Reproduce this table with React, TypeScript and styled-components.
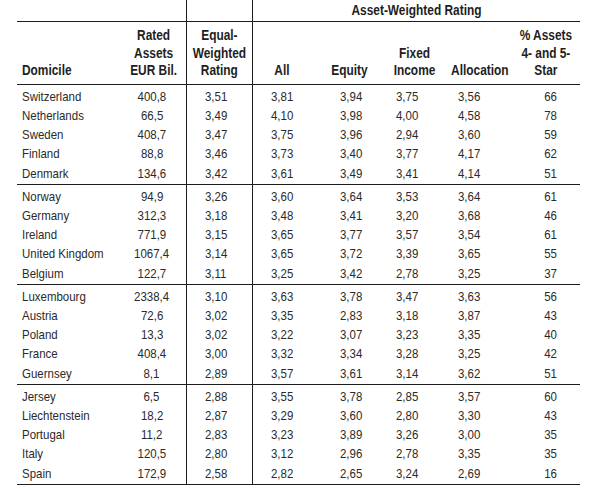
import React from 'react'
import styled, { createGlobalStyle } from 'styled-components'

type Row = [string, string, string, string, string, string, string, string];

const groups: Row[][] = [
    [
        ['Switzerland', '400,8', '3,51', '3,81', '3,94', '3,75', '3,56', '66'],
        ['Netherlands', '66,5', '3,49', '4,10', '3,98', '4,00', '4,58', '78'],
        ['Sweden', '408,7', '3,47', '3,75', '3,96', '2,94', '3,60', '59'],
        ['Finland', '88,8', '3,46', '3,73', '3,40', '3,77', '4,17', '62'],
        ['Denmark', '134,6', '3,42', '3,61', '3,49', '3,41', '4,14', '51'],
    ],
    [
        ['Norway', '94,9', '3,26', '3,60', '3,64', '3,53', '3,64', '61'],
        ['Germany', '312,3', '3,18', '3,48', '3,41', '3,20', '3,68', '46'],
        ['Ireland', '771,9', '3,15', '3,65', '3,77', '3,57', '3,54', '61'],
        ['United Kingdom', '1067,4', '3,14', '3,65', '3,72', '3,39', '3,65', '55'],
        ['Belgium', '122,7', '3,11', '3,25', '3,42', '2,78', '3,25', '37'],
    ],
    [
        ['Luxembourg', '2338,4', '3,10', '3,63', '3,78', '3,47', '3,63', '56'],
        ['Austria', '72,6', '3,02', '3,35', '2,83', '3,18', '3,87', '43'],
        ['Poland', '13,3', '3,02', '3,22', '3,07', '3,23', '3,35', '40'],
        ['France', '408,4', '3,00', '3,32', '3,34', '3,28', '3,25', '42'],
        ['Guernsey', '8,1', '2,89', '3,57', '3,61', '3,14', '3,62', '51'],
    ],
    [
        ['Jersey', '6,5', '2,88', '3,55', '3,78', '2,85', '3,57', '60'],
        ['Liechtenstein', '18,2', '2,87', '3,29', '3,60', '2,80', '3,30', '43'],
        ['Portugal', '11,2', '2,83', '3,23', '3,89', '3,26', '3,00', '35'],
        ['Italy', '120,5', '2,80', '3,12', '2,96', '2,78', '3,35', '35'],
        ['Spain', '172,9', '2,58', '2,82', '2,65', '3,24', '2,69', '16'],
    ],
];

// column widths and how far the numbers sit off the column centre
const widths = [105, 64, 66, 60, 70, 66, 64, 68];
const shifts = [0, -2, -3, 0, 4, -8, -11, 4];
// row heights and top padding inside one group of five (a rule follows the last)
const rowHeights = [22, 19, 19, 19, 21];
const rowPads = [3, 0, 0, 0, 1];

const headers: string[][] = [
    ['Domicile'],
    ['Rated', 'Assets', 'EUR Bil.'],
    ['Equal-', 'Weighted', 'Rating'],
    ['All'],
    ['Equity'],
    ['Fixed', 'Income'],
    ['Allocation'],
    ['% Assets', '4- and 5-', 'Star'],
];

const App = () => {
    return (
        <>
            <GlobalStyle />
            <Page>
                <Table>
                    <colgroup>
                        {widths.map((w, i) => <col key={i} style={{ width: w }} />)}
                    </colgroup>
                    <thead>
                        <tr>
                            <SuperCell colSpan={2} />
                            <SuperCell $ruled />
                            <SuperCell $ruled colSpan={5}>
                                <Fit><Squeeze>Asset-Weighted Rating</Squeeze></Fit>
                            </SuperCell>
                        </tr>
                        <tr>
                            {headers.map((lines, i) => (
                                <HeadCell key={i} $left={i === 0} $ruled={i === 2 || i === 3} $shift={i === 4 ? 2 : 0}>
                                    <Fit $left={i === 0}>
                                        <Squeeze $left={i === 0}>
                                            {lines.map((l, j) => <div key={j}>{l}</div>)}
                                        </Squeeze>
                                    </Fit>
                                </HeadCell>
                            ))}
                        </tr>
                    </thead>
                    <tbody>
                        {groups.map((rows, g) =>
                            rows.map((row, r) => (
                                <tr key={g + '-' + r}>
                                    {row.map((v, i) => (
                                        <DataCell
                                            key={i}
                                            $left={i === 0}
                                            $ruled={i === 2 || i === 3}
                                            $end={r === rows.length - 1}
                                            $h={rowHeights[r]}
                                            $pad={rowPads[r]}
                                            $shift={shifts[i]}
                                        >
                                            <Fit $left={i === 0}>
                                                <Squeeze $left={i === 0}>{v}</Squeeze>
                                            </Fit>
                                        </DataCell>
                                    ))}
                                </tr>
                            ))
                        )}
                    </tbody>
                </Table>
            </Page>
        </>
    )
}

export default App


const LINE = '#1c1c1c';

const GlobalStyle = createGlobalStyle`
    body {
        margin: 0;
        background: #ffffff;
        font-family: "Liberation Sans", Arial, sans-serif;
    }
`;

const Page = styled.div`
    padding-left: 17px;
    width: 600px;
    height: 490px;
    box-sizing: border-box;
    overflow: hidden;
`;

const Table = styled.table`
    border-collapse: collapse;
    table-layout: fixed;
    width: 563px;
`;

// the type is a condensed grotesque: squeeze Liberation Sans sideways
const Fit = styled.div<{ $left?: boolean }>`
    display: flex;
    justify-content: ${p => (p.$left ? 'flex-start' : 'center')};
`;

const Squeeze = styled.span<{ $left?: boolean }>`
    display: inline-block;
    flex-shrink: 0;
    white-space: nowrap;
    transform: scaleX(0.85);
    transform-origin: ${p => (p.$left ? 'left' : 'center')} center;
`;

const SuperCell = styled.th<{ $ruled?: boolean }>`
    box-sizing: border-box;
    height: 21px;
    padding: 0;
    border-bottom: 1px solid ${LINE};
    border-left: ${p => (p.$ruled ? `1px solid ${LINE}` : 'none')};
    font-size: 14px;
    line-height: 18px;
    font-weight: bold;
    color: #1e1e1e;
    vertical-align: middle;
`;

const HeadCell = styled.th<{ $left?: boolean; $ruled?: boolean; $shift: number }>`
    box-sizing: border-box;
    height: 63px;
    padding: 0 0 4px ${p => (p.$left ? 5 : p.$shift * 2)}px;
    border-bottom: 1px solid ${LINE};
    border-left: ${p => (p.$ruled ? `1px solid ${LINE}` : 'none')};
    font-size: 14px;
    line-height: 17.5px;
    font-weight: bold;
    color: #1e1e1e;
    text-align: ${p => (p.$left ? 'left' : 'center')};
    vertical-align: bottom;
`;

const DataCell = styled.td<{ $left?: boolean; $ruled?: boolean; $end?: boolean; $h: number; $pad: number; $shift: number }>`
    box-sizing: border-box;
    height: ${p => p.$h}px;
    padding: ${p => p.$pad}px ${p => (p.$shift < 0 ? -p.$shift * 2 : 0)}px 0 ${p => (p.$left ? 5 : p.$shift > 0 ? p.$shift * 2 : 0)}px;
    border-bottom: ${p => (p.$end ? `1px solid ${LINE}` : 'none')};
    border-left: ${p => (p.$ruled ? `1px solid ${LINE}` : 'none')};
    font-size: 13.5px;
    line-height: 17px;
    color: #2a2a2a;
    vertical-align: middle;
`;
